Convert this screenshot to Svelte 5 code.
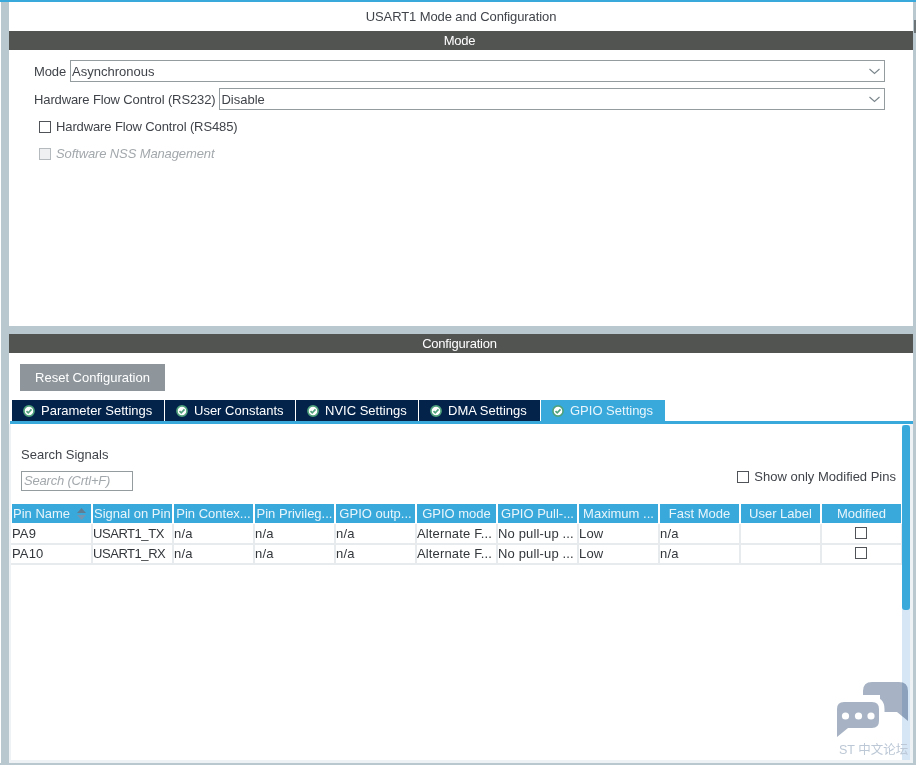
<script>
  const tabs = [
    { label: 'Parameter Settings', w: 153 },
    { label: 'User Constants', w: 131 },
    { label: 'NVIC Settings', w: 123 },
    { label: 'DMA Settings', w: 122 },
    { label: 'GPIO Settings', w: 124, active: true }
  ];
  const cols = [
    'Pin Name', 'Signal on Pin', 'Pin Contex...', 'Pin Privileg...', 'GPIO outp...', 'GPIO mode',
    'GPIO Pull-...', 'Maximum ...', 'Fast Mode', 'User Label', 'Modified'
  ];
  const rows = [
    ['PA9', 'USART1_TX', 'n/a', 'n/a', 'n/a', 'Alternate F...', 'No pull-up ...', 'Low', 'n/a', ''],
    ['PA10', 'USART1_RX', 'n/a', 'n/a', 'n/a', 'Alternate F...', 'No pull-up ...', 'Low', 'n/a', '']
  ];
</script>

<div class="page">
  <div class="frame">
    <section class="top">
      <div class="title">USART1 Mode and Configuration</div>
      <div class="bar">Mode</div>
      <div class="form">
        <div class="field">
          <span class="lbl">Mode</span>
          <div class="select">
            <span>Asynchronous</span>
            <svg width="11" height="7" viewBox="0 0 11 7"><path d="M.5 1 5.5 5.5 10.5 1" fill="none" stroke="#7b868c" stroke-width="1.1" /></svg>
          </div>
        </div>
        <div class="field second">
          <span class="lbl">Hardware Flow Control (RS232)</span>
          <div class="select">
            <span>Disable</span>
            <svg width="11" height="7" viewBox="0 0 11 7"><path d="M.5 1 5.5 5.5 10.5 1" fill="none" stroke="#7b868c" stroke-width="1.1" /></svg>
          </div>
        </div>
        <div class="check c1"><i class="box"></i><span>Hardware Flow Control (RS485)</span></div>
        <div class="check c2"><i class="box off"></i><span>Software NSS Management</span></div>
      </div>
    </section>

    <section class="bottom">
      <div class="bar">Configuration</div>
      <div class="reset">Reset Configuration</div>
      <div class="tabs">
        {#each tabs as t}
          <div class="tab" class:active={t.active} style="width:{t.w}px">
            <svg width="12" height="12" viewBox="0 0 13 13">
              <circle cx="6.5" cy="6.5" r="5.5" fill="#fff" stroke="#4fa27c" stroke-width="1.8" />
              <path d="M3.8 6.6 5.7 8.5 9.2 4.8" fill="none" stroke="#4fa27c" stroke-width="1.8" />
            </svg>
            <span>{t.label}</span>
          </div>
        {/each}
      </div>
      <div class="content">
        <div class="track"></div>
        <div class="scroll"></div>
        <div class="search">
          <div class="search-left">
            <div class="search-label">Search Signals</div>
            <div class="search-input">Search (Crtl+F)</div>
          </div>
          <div class="check modified"><i class="box"></i><span>Show only Modified Pins</span></div>
        </div>
        <div class="table">
          {#each cols as c, i}
            <div class="th" class:left={i < 2}>
              <span>{c}</span>
              {#if i === 0}
                <svg class="sort" width="9" height="12" viewBox="0 0 9 12">
                  <path d="M4.5 0 9 5H0Z" fill="#5f7d92" />
                  <path d="M4.5 12 9 7H0Z" fill="#7396b2" />
                </svg>
              {/if}
            </div>
          {/each}
          {#each rows as r}
            {#each r as v, i}
              <div class="td" class:signal={i === 1}>{v}</div>
            {/each}
            <div class="td center"><i class="box"></i></div>
          {/each}
        </div>
      </div>
    </section>
  </div>

  <i class="edge"></i>

  <div class="chat">
    <svg width="74" height="58" viewBox="836 681 74 58">
      <path d="M863 691Q863 682 872 682H899Q908 682 908 691V721L897 712H880V695H863Z" fill="#a7b3c4" />
      <path d="M844 702H872Q879 702 879 709V721Q879 728 872 728H848L837 737V709Q837 702 844 702Z" fill="#a7b3c4" stroke="#fff" stroke-width="11" paint-order="stroke" stroke-linejoin="round" />
      <circle cx="845.5" cy="716" r="3.6" fill="#fff" />
      <circle cx="858.5" cy="716" r="3.6" fill="#fff" />
      <circle cx="871" cy="716" r="3.6" fill="#fff" />
    </svg>
    <div class="chat-label">ST 中文论坛</div>
  </div>
</div>

<style>
  :global(body) {
    margin: 0;
    background: #b9c7ce;
  }
  .page {
    width: 916px;
    height: 765px;
    position: relative;
    overflow: hidden;
    border-top: 2px solid #39a9dc;
    box-sizing: border-box;
    font-family: "Liberation Sans", Arial, sans-serif;
    font-size: 13px;
    color: #40444a;
  }
  .frame {
    border-left: 1px solid #fff;
    padding-left: 8px;
    width: 904px;
    display: flex;
    flex-direction: column;
    gap: 8px;
  }
  .top {
    background: #fff;
    height: 324px;
  }
  .title {
    height: 29px;
    line-height: 29px;
    text-align: center;
    letter-spacing: -0.1px;
  }
  .bar {
    height: 19px;
    line-height: 19px;
    padding-right: 3px;
    text-align: center;
    background: #525452;
    color: #fff;
    letter-spacing: -0.2px;
  }
  .form {
    padding: 10px 28px 0 25px;
    letter-spacing: -0.12px;
  }
  .field {
    display: flex;
    align-items: center;
    height: 22px;
    gap: 4px;
  }
  .field.second {
    margin-top: 6px;
  }
  .select {
    flex: 1;
    height: 22px;
    box-sizing: border-box;
    border: 1px solid #959ca0;
    display: flex;
    align-items: center;
    justify-content: space-between;
    padding: 0 4px 0 1px;
    letter-spacing: 0;
  }
  .check {
    display: flex;
    align-items: center;
    gap: 5px;
  }
  .box {
    display: block;
    width: 12px;
    height: 12px;
    box-sizing: border-box;
    border: 1px solid #505458;
    background: #fff;
  }
  .box.off {
    background: #eef0f2;
    border-color: #b4babd;
  }
  .c1 {
    margin: 8px 0 0 5px;
    height: 17px;
  }
  .c2 {
    margin: 10px 0 0 5px;
    height: 17px;
    color: #a3a8ac;
    font-style: italic;
  }
  .bottom {
    background: #fff;
    height: 429px;
  }
  .reset {
    margin: 11px 0 0 11px;
    width: 145px;
    height: 27px;
    line-height: 27px;
    text-align: center;
    background: #8e969c;
    color: #fff;
  }
  .tabs {
    display: flex;
    margin: 9px 0 0 1px;
    padding-left: 2px;
    height: 21px;
    border-bottom: 3px solid #39a9dc;
  }
  .tab {
    box-sizing: border-box;
    display: flex;
    align-items: center;
    gap: 6px;
    padding-left: 11px;
    background: #03234b;
    color: #fff;
    border-right: 1px solid #fff;
  }
  .tab.active {
    background: #39a9dc;
    color: #e8f5fb;
    border-right: 0;
  }
  .content {
    position: relative;
    box-sizing: border-box;
    height: 339px;
    border: solid #eef2f5;
    border-width: 0 3px 3px 2px;
  }
  .track {
    position: absolute;
    right: 0;
    top: 1px;
    bottom: 0;
    width: 8px;
    background: #d6e6f5;
  }
  .scroll {
    position: absolute;
    right: 0;
    top: 1px;
    width: 8px;
    height: 185px;
    background: #39a9dc;
    border-radius: 3px;
  }
  .search {
    display: flex;
    justify-content: space-between;
    padding: 22px 14px 0 10px;
    height: 58px;
  }
  .search-label {
    line-height: 17px;
  }
  .search-input {
    margin-top: 8px;
    width: 112px;
    height: 20px;
    box-sizing: border-box;
    border: 1px solid #959ca0;
    line-height: 18px;
    padding-left: 2px;
    color: #a3a8ac;
    font-style: italic;
    font-size: 13px;
    letter-spacing: -0.2px;
  }
  .modified {
    align-self: flex-start;
    margin-top: 22px;
    height: 17px;
  }
  .table {
    width: 891px;
    display: grid;
    grid-template-columns: repeat(11, 81px);
    grid-auto-rows: 20px;
  }
  .th {
    position: relative;
    box-sizing: border-box;
    background: #39a9dc;
    color: #e8f5fb;
    border-left: 1px solid #fff;
    border-right: 1px solid #fff;
    margin-bottom: 1px;
    height: 19px;
    line-height: 19px;
    text-align: center;
    white-space: nowrap;
    overflow: hidden;
  }
  .th.left {
    text-align: left;
    padding-left: 1px;
  }
  .sort {
    position: absolute;
    right: 5px;
    top: 4px;
  }
  .td {
    box-sizing: border-box;
    border-right: 2px solid #e8ebed;
    border-bottom: 2px solid #e8ebed;
    margin-right: -1px;
    margin-bottom: -1px;
    line-height: 20px;
    padding-left: 1px;
    color: #33373b;
    letter-spacing: 0.15px;
    white-space: nowrap;
    overflow: hidden;
  }
  .td.signal {
    letter-spacing: -0.45px;
  }
  .center {
    display: flex;
    align-items: center;
    justify-content: center;
    padding: 0 0 1px;
  }
  .edge {
    position: absolute;
    left: 914px;
    top: 18px;
    width: 2px;
    height: 13px;
    background: #6d7478;
  }
  .chat {
    position: absolute;
    left: 836px;
    top: 679px;
    width: 78px;
  }
  .chat svg {
    display: block;
    mix-blend-mode: multiply;
  }
  .chat-label {
    margin: 0 0 0 3px;
    font-size: 12.5px;
    color: #bcc8d6;
    font-family: "Liberation Sans", "Noto Sans CJK SC", sans-serif;
    white-space: nowrap;
  }
</style>
